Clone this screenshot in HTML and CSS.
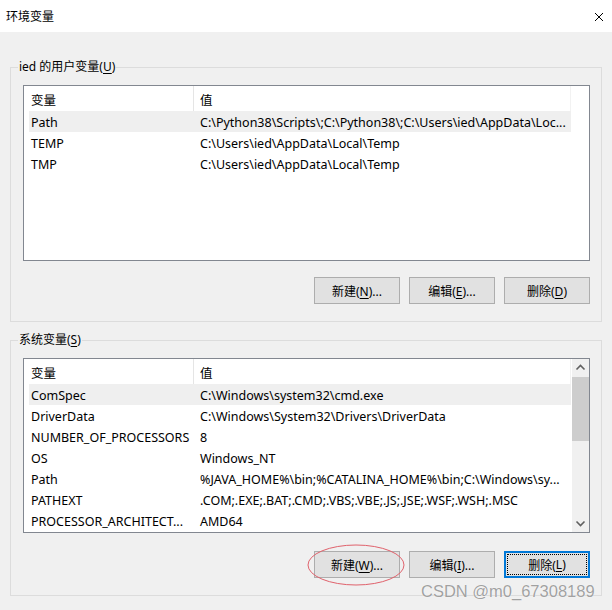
FILE: index.html
```html
<!DOCTYPE html>
<html lang="zh-CN">
<head>
  <meta charset="UTF-8">
  <title>环境变量</title>
  <link rel="stylesheet" href="styles.css">
</head>
<body>
  <div class="titlebar">
    <span class="title">环境变量</span>
    <svg class="close" width="10" height="10" viewBox="0 0 10 10">
      <path d="M1 1 L9 9 M9 1 L1 9" stroke="#000" stroke-width="1" fill="none"/>
    </svg>
  </div>

  <div class="dialog">
    <fieldset class="group">
      <legend>ied 的用户变量(<u>U</u>)</legend>
      <div class="list list-user">
        <div class="list-body">
          <div class="row head"><span class="name">变量</span><span class="value">值</span></div>
          <div class="row selected"><span class="name">Path</span><span class="value">C:\Python38\Scripts\;C:\Python38\;C:\Users\ied\AppData\Loc...</span></div>
          <div class="row"><span class="name">TEMP</span><span class="value">C:\Users\ied\AppData\Local\Temp</span></div>
          <div class="row"><span class="name">TMP</span><span class="value">C:\Users\ied\AppData\Local\Temp</span></div>
        </div>
        <div class="gutter"></div>
      </div>
      <div class="buttons">
        <button class="btn">新建(<u>N</u>)...</button>
        <button class="btn">编辑(<u>E</u>)...</button>
        <button class="btn">删除(<u>D</u>)</button>
      </div>
    </fieldset>

    <fieldset class="group group-system">
      <legend>系统变量(<u>S</u>)</legend>
      <div class="list list-system">
        <div class="list-body">
          <div class="row head"><span class="name">变量</span><span class="value">值</span></div>
          <div class="row selected"><span class="name">ComSpec</span><span class="value">C:\Windows\system32\cmd.exe</span></div>
          <div class="row"><span class="name">DriverData</span><span class="value">C:\Windows\System32\Drivers\DriverData</span></div>
          <div class="row"><span class="name">NUMBER_OF_PROCESSORS</span><span class="value">8</span></div>
          <div class="row"><span class="name">OS</span><span class="value">Windows_NT</span></div>
          <div class="row"><span class="name">Path</span><span class="value">%JAVA_HOME%\bin;%CATALINA_HOME%\bin;C:\Windows\sy...</span></div>
          <div class="row"><span class="name">PATHEXT</span><span class="value">.COM;.EXE;.BAT;.CMD;.VBS;.VBE;.JS;.JSE;.WSF;.WSH;.MSC</span></div>
          <div class="row"><span class="name">PROCESSOR_ARCHITECT...</span><span class="value">AMD64</span></div>
        </div>
        <div class="gutter">
          <div class="scrollbar">
            <svg class="arrow" width="17" height="17" viewBox="0 0 17 17">
              <polyline points="4.5,10.5 8.5,6.5 12.5,10.5" stroke="#606060" stroke-width="1.6" fill="none"/>
            </svg>
            <div class="track"><div class="thumb"></div></div>
            <svg class="arrow" width="17" height="17" viewBox="0 0 17 17">
              <polyline points="4.5,6.5 8.5,10.5 12.5,6.5" stroke="#606060" stroke-width="1.6" fill="none"/>
            </svg>
          </div>
        </div>
      </div>
      <div class="buttons buttons-system">
        <button class="btn">新建(<u>W</u>)...</button>
        <button class="btn">编辑(<u>I</u>)...</button>
        <button class="btn btn-focus"><span class="focus-ring">删除(<u>L</u>)</span></button>
      </div>
    </fieldset>
  </div>

  <!-- annotation over the screenshot -->
  <svg class="circle-mark" width="100" height="44" viewBox="0 0 100 44">
    <ellipse cx="50" cy="22" rx="48" ry="20" stroke="#e0626c" stroke-width="1" fill="none"/>
  </svg>
  <div class="watermark">CSDN @m0_67308189</div>
</body>
</html>
```

FILE: styles.css
```css
body {
  margin: 0;
  width: 612px;
  height: 610px;
  position: relative;
  overflow: hidden;
  background: #f0f0f0;
  font-family: "Noto Sans", "Noto Sans CJK SC", sans-serif;
  font-size: 12px;
  color: #000;
}

u {
  text-decoration: underline;
  text-underline-offset: 2px;
}

.titlebar {
  height: 32px;
  background: #fff;
  display: flex;
  align-items: center;
  justify-content: space-between;
  padding: 0 8px 0 6px;
}

.title {
  font-size: 12px;
}

.close {
  margin-top: 2px;
}

.dialog {
  padding-top: 27px;
}

.group {
  margin: 0 0 0 10px;
  width: 592px;
  box-sizing: border-box;
  border: 1px solid #dcdcdc;
  padding: 10px 11px 17px 12px;
  min-width: 0;
}

.group legend {
  padding: 0 1px;
  margin-left: -5px;
  line-height: 16px;
}

.group-system {
  margin-top: 10px;
}

.list {
  display: flex;
  height: 176px;
  box-sizing: border-box;
  border: 1px solid #828790;
  background: #fff;
}

.list-system {
  height: 175px;
}

.list-body {
  flex: 1;
  min-width: 0;
  padding-left: 5px;
}

.gutter {
  width: 18px;
  display: flex;
  justify-content: flex-end;
}

.row {
  display: flex;
  height: 21px;
  align-items: center;
  white-space: nowrap;
  font-size: 12.5px;
}

.row.head {
  height: 25px;
  border-right: 1px solid #f2f2f2;
}

.row.selected {
  background: #efefef;
}

.name {
  width: 162px;
  padding: 2px 0 0 2px;
  overflow: hidden;
  flex-shrink: 0;
}

.value {
  flex: 1;
  height: 100%;
  display: flex;
  align-items: center;
  padding: 2px 0 0 6px;
  box-sizing: border-box;
  border-left: 1px solid transparent;
  overflow: hidden;
}

.head .value {
  border-left-color: #e5e5e5;
}

.scrollbar {
  width: 17px;
  height: 100%;
  background: #f0f0f0;
  display: flex;
  flex-direction: column;
}

.arrow {
  display: block;
  flex-shrink: 0;
}

.track {
  flex: 1;
  padding-top: 1px;
}

.thumb {
  height: 64px;
  background: #cdcdcd;
}

.buttons {
  display: flex;
  justify-content: flex-end;
  gap: 9px;
  margin-top: 16px;
}

.buttons-system {
  margin-top: 18px;
}

.btn {
  width: 86px;
  height: 27px;
  padding: 0;
  background: #e1e1e1;
  border: 1px solid #adadad;
  font-family: inherit;
  font-size: 12px;
  color: #000;
}

.btn-focus {
  border: 2px solid #0078d7;
  display: flex;
  padding: 1px;
}

.focus-ring {
  flex: 1;
  display: flex;
  align-items: center;
  justify-content: center;
  border: 1px dotted #000;
}

.circle-mark {
  position: absolute;
  left: 306px;
  top: 543px;
}

.watermark {
  position: absolute;
  left: 421px;
  top: 582px;
  font-family: "Liberation Sans", Arial, sans-serif;
  font-size: 16.5px;
  color: rgba(120, 120, 120, 0.7);
  text-shadow: 0 0 1px #fff;
}
```
